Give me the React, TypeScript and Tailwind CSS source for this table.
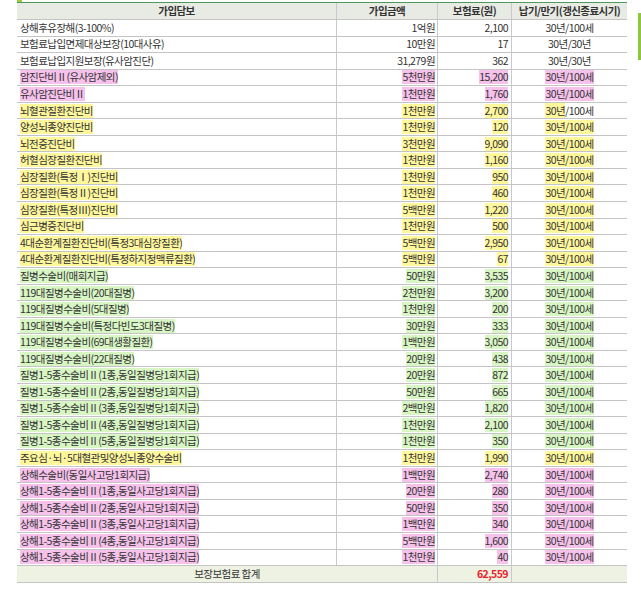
import React from "react";

type HL = "none" | "pink" | "yellow" | "green";
type Row = [string, string, string, string, HL, boolean?];

const rows: Row[] = [
  ["상해후유장해(3-100%)", "1억원", "2,100", "30년/100세", "none"],
  ["보험료납입면제대상보장(10대사유)", "10만원", "17", "30년/30년", "none"],
  ["보험료납입지원보장(유사암진단)", "31,279원", "362", "30년/30년", "none"],
  ["암진단비Ⅱ(유사암제외)", "5천만원", "15,200", "30년/100세", "pink"],
  ["유사암진단비Ⅱ", "1천만원", "1,760", "30년/100세", "pink"],
  ["뇌혈관질환진단비", "1천만원", "2,700", "30년/100세", "yellow", true],
  ["양성뇌종양진단비", "1천만원", "120", "30년/100세", "yellow"],
  ["뇌전증진단비", "3천만원", "9,090", "30년/100세", "yellow"],
  ["허혈심장질환진단비", "1천만원", "1,160", "30년/100세", "yellow"],
  ["심장질환(특정Ⅰ)진단비", "1천만원", "950", "30년/100세", "yellow"],
  ["심장질환(특정Ⅱ)진단비", "1천만원", "460", "30년/100세", "yellow"],
  ["심장질환(특정Ⅲ)진단비", "5백만원", "1,220", "30년/100세", "yellow"],
  ["심근병증진단비", "1천만원", "500", "30년/100세", "yellow"],
  ["4대순환계질환진단비(특정3대심장질환)", "5백만원", "2,950", "30년/100세", "yellow"],
  ["4대순환계질환진단비(특정하지정맥류질환)", "5백만원", "67", "30년/100세", "yellow"],
  ["질병수술비(매회지급)", "50만원", "3,535", "30년/100세", "green"],
  ["119대질병수술비(20대질병)", "2천만원", "3,200", "30년/100세", "green"],
  ["119대질병수술비(5대질병)", "1천만원", "200", "30년/100세", "green"],
  ["119대질병수술비(특정다빈도3대질병)", "30만원", "333", "30년/100세", "green"],
  ["119대질병수술비(69대생활질환)", "1백만원", "3,050", "30년/100세", "green"],
  ["119대질병수술비(22대질병)", "20만원", "438", "30년/100세", "green"],
  ["질병1-5종수술비Ⅱ(1종,동일질병당1회지급)", "20만원", "872", "30년/100세", "green"],
  ["질병1-5종수술비Ⅱ(2종,동일질병당1회지급)", "50만원", "665", "30년/100세", "green"],
  ["질병1-5종수술비Ⅱ(3종,동일질병당1회지급)", "2백만원", "1,820", "30년/100세", "green"],
  ["질병1-5종수술비Ⅱ(4종,동일질병당1회지급)", "1천만원", "2,100", "30년/100세", "green"],
  ["질병1-5종수술비Ⅱ(5종,동일질병당1회지급)", "1천만원", "350", "30년/100세", "green"],
  ["주요심·뇌·5대혈관및양성뇌종양수술비", "1천만원", "1,990", "30년/100세", "yellow"],
  ["상해수술비(동일사고당1회지급)", "1백만원", "2,740", "30년/100세", "pink"],
  ["상해1-5종수술비Ⅱ(1종,동일사고당1회지급)", "20만원", "280", "30년/100세", "pink"],
  ["상해1-5종수술비Ⅱ(2종,동일사고당1회지급)", "50만원", "350", "30년/100세", "pink"],
  ["상해1-5종수술비Ⅱ(3종,동일사고당1회지급)", "1백만원", "340", "30년/100세", "pink"],
  ["상해1-5종수술비Ⅱ(4종,동일사고당1회지급)", "5백만원", "1,600", "30년/100세", "pink"],
  ["상해1-5종수술비Ⅱ(5종,동일사고당1회지급)", "1천만원", "40", "30년/100세", "pink"],
];

const hlClass: Record<HL, string> = {
  none: "",
  pink: "bg-[#f6c2ec]",
  yellow: "bg-[#fff79c]",
  green: "bg-[#d8f6c4]",
};

function Mark({ hl, children }: { hl: HL; children: React.ReactNode }) {
  return <span className={hlClass[hl]}>{children}</span>;
}

export default function App() {
  return (
    <div
      className="w-[641px] h-[595px] bg-white overflow-hidden text-[#333] text-[10.5px] leading-[14px] tracking-[-0.55px]"
      style={{ fontFamily: '"Noto Sans CJK KR", "Noto Sans", sans-serif' }}
    >
      <div className="flex">
        <div className="w-[610px] ml-[17px]">
          <div className="h-[2px] flex">
            <div className="w-[5px] h-[2px] bg-[#9ccc3c]" />
          </div>
          <div className="h-[1px] bg-[#4c9a5c]" />
          {/* header */}
          <div className="flex h-[17px] bg-[#e8ebe3] border-b border-[#c4c4c4] font-bold">
            <div className="w-[320px] flex items-center justify-center border-r border-[#c8c8d2]">가입담보</div>
            <div className="w-[101px] flex items-center justify-center border-r border-[#c8c8d2]">가입금액</div>
            <div className="w-[74px] flex items-center justify-center border-r border-[#c8c8d2]">보험료(원)</div>
            <div className="flex-1 flex items-center justify-center">납기/만기(갱신종료시기)</div>
          </div>
          {rows.map((r, i) => (
            <div key={i} className="flex h-[16.55px] border-b border-[#c4c4c4]">
              <div className="w-[320px] flex items-center pl-[3px] border-r border-[#c8c8d2] whitespace-nowrap">
                <Mark hl={r[4]}>{r[0]}</Mark>
              </div>
              <div className="w-[101px] flex items-center justify-end pr-[2px] border-r border-[#c8c8d2]">
                <Mark hl={r[4]}>{r[1]}</Mark>
              </div>
              <div className="w-[74px] flex items-center justify-end pr-[3px] border-r border-[#c8c8d2]">
                <Mark hl={r[4]}>{r[2]}</Mark>
              </div>
              <div className="flex-1 flex items-center justify-center">
                {r[5] ? (
                  <span>
                    <Mark hl={r[4]}>30년</Mark>/100세
                  </span>
                ) : (
                  <Mark hl={r[4]}>{r[3]}</Mark>
                )}
              </div>
            </div>
          ))}
          {/* total */}
          <div className="flex h-[16.6px] bg-[#eef2e2] border-b border-[#c4c4c4]">
            <div className="w-[421px] flex items-center justify-center border-r border-[#c8c8d2]">보장보험료 합계</div>
            <div className="w-[74px] flex items-center justify-end pr-[3px] border-r border-[#c8c8d2] font-bold text-[#e8212b]">
              62,559
            </div>
            <div className="flex-1" />
          </div>
        </div>
        <div className="ml-[11px] mt-[13px] w-[3px] h-[47px] bg-[#8dc63f]" />
      </div>
    </div>
  );
}
